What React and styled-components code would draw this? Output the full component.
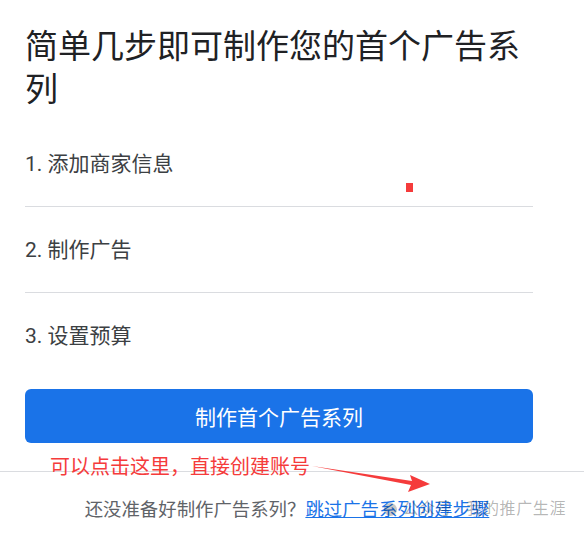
import React from "react";
import styled, { createGlobalStyle } from "styled-components";

const GlobalStyle = createGlobalStyle`
  body {
    margin: 0;
    background: #fff;
    font-family: Roboto, "Noto Sans CJK SC", sans-serif;
  }
`;

const steps = ["1. 添加商家信息", "2. 制作广告", "3. 设置预算"];

function App() {
  return (
    <Page>
      <GlobalStyle />
      <Content>
        <Title>简单几步即可制作您的首个广告系列</Title>
        <StepList>
          {steps.map((s, i) => (
            <Step key={s} last={i === steps.length - 1}>
              {s}
            </Step>
          ))}
        </StepList>
        <PrimaryButton>制作首个广告系列</PrimaryButton>
      </Content>
      <Footer>
        还没准备好制作广告系列？<SkipLink href="#">跳过广告系列创建步骤</SkipLink>
      </Footer>

      <RedMark />
      <Note>可以点击这里，直接创建账号</Note>
      <Arrow width="130" height="34" viewBox="0 0 130 34">
        <path d="M0 3 L100 18 L98 12 L118 21 L96 29 L99 22 Z" fill="#f53b3b" />
      </Arrow>
      <Watermark>
        <WmIcon />
        公众号 · 我的推广生涯
      </Watermark>
    </Page>
  );
}

export default App;

const Page = styled.div`
  position: relative;
  width: 584px;
  height: 534px;
  overflow: hidden;
`;

const Content = styled.div`
  padding: 25px 51px 0 25px;
  display: flex;
  flex-direction: column;
`;

const Title = styled.h1`
  margin: 0;
  font-size: 33px;
  line-height: 43px;
  font-weight: 400;
  color: #202124;
`;

const StepList = styled.div`
  margin-top: 10px;
  display: flex;
  flex-direction: column;
`;

const Step = styled.div`
  padding: 31px 0 ${({ last }) => (last ? "0" : "30px")};
  font-size: 21px;
  line-height: 24px;
  color: #3c4043;
  border-bottom: ${({ last }) => (last ? "none" : "1px solid #dadce0")};
`;

const PrimaryButton = styled.button`
  margin-top: 41px;
  height: 54px;
  border: none;
  border-radius: 6px;
  background: #1a73e8;
  color: #fff;
  font-family: inherit;
  font-size: 21px;
`;

const Footer = styled.div`
  margin-top: 28px;
  border-top: 1px solid #dadce0;
  padding: 26px 10px 0 0;
  display: flex;
  justify-content: center;
  font-size: 18.4px;
  line-height: 24px;
  color: #5f6368;
`;

const SkipLink = styled.a`
  color: #1a73e8;
  text-decoration: underline;
`;

const RedMark = styled.div`
  position: absolute;
  left: 406px;
  top: 183px;
  width: 7px;
  height: 9px;
  background: #f53b3b;
`;

const Note = styled.div`
  position: absolute;
  left: 50px;
  top: 455px;
  font-size: 20px;
  line-height: 24px;
  color: #f53b3b;
`;

const Arrow = styled.svg`
  position: absolute;
  left: 312px;
  top: 463px;
`;

const Watermark = styled.div`
  position: absolute;
  right: 18px;
  top: 498px;
  display: flex;
  align-items: center;
  gap: 6px;
  font-size: 16px;
  line-height: 22px;
  letter-spacing: 0.6px;
  color: rgba(0, 0, 0, 0.3);
`;

const WmIcon = styled.span`
  width: 13px;
  height: 13px;
  border-radius: 50%;
  background: rgba(0, 0, 0, 0.22);
`;
